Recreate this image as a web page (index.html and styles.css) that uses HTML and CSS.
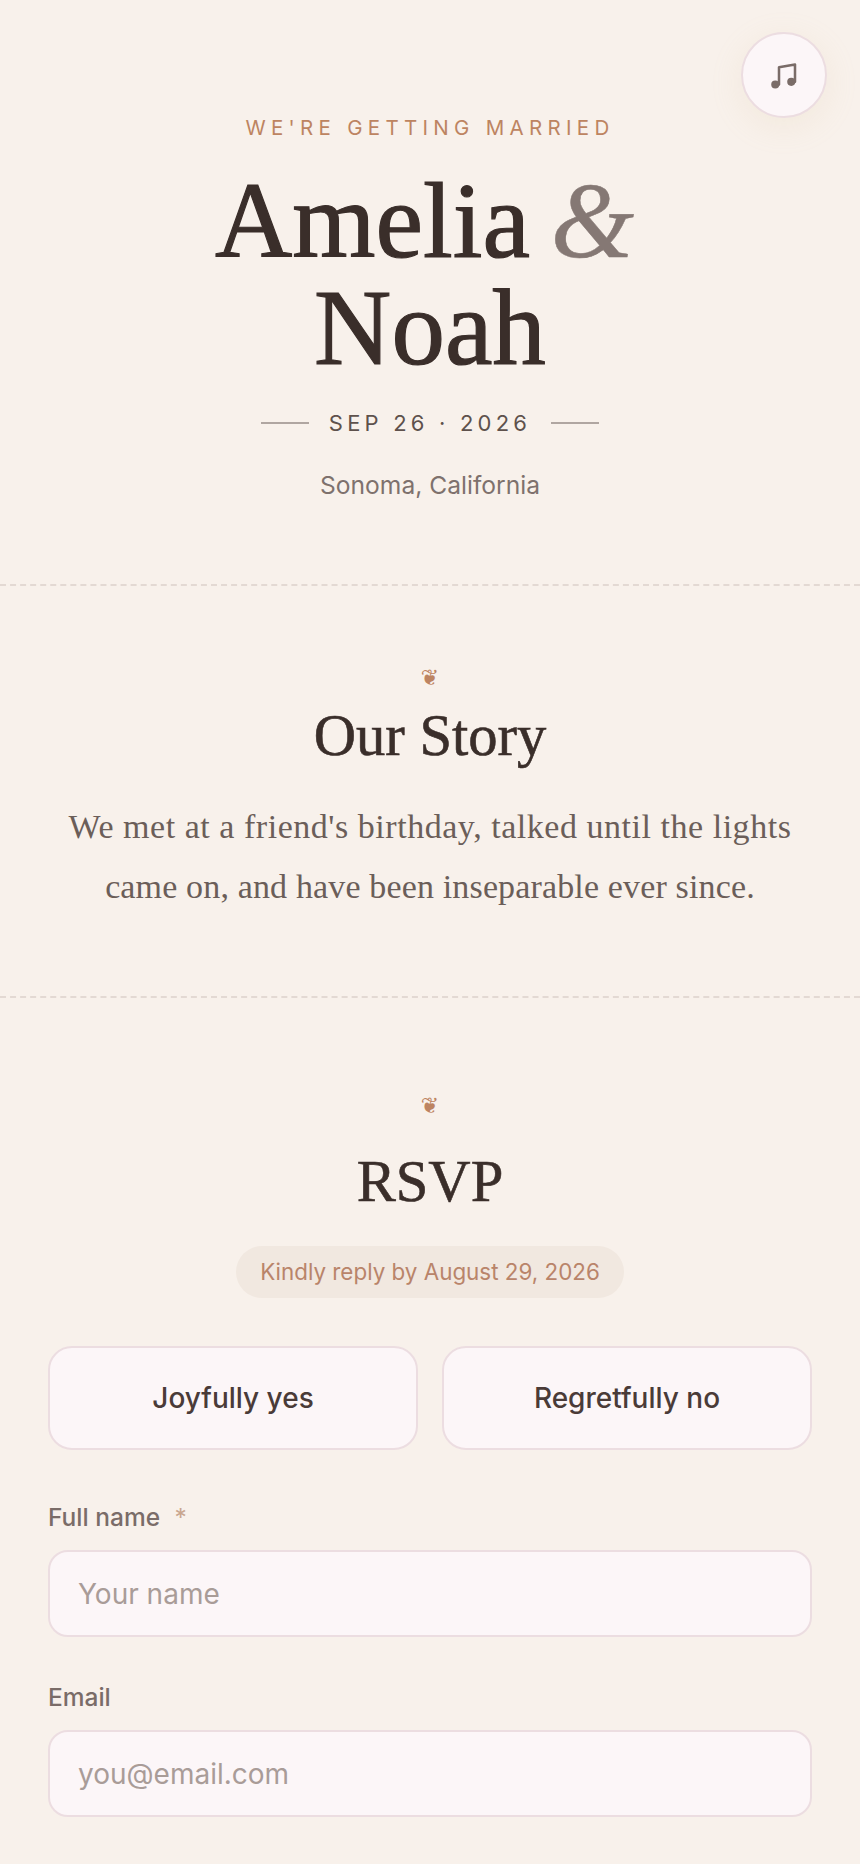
FILE: index.html
```html
<!DOCTYPE html>
<html lang="en">
<head>
    <meta charset="UTF-8">
    <meta name="viewport" content="width=device-width, initial-scale=1.0">
    <title>Amelia &amp; Noah</title>
    <link rel="stylesheet" href="styles.css">
</head>
<body>
    <button class="music-btn" type="button" aria-label="Play music">
        <svg class="music-icon" width="32" height="32" viewBox="0 0 24 24" fill="none" stroke="#7a6c68" stroke-width="1.9" stroke-linecap="round" stroke-linejoin="round">
            <path d="M9 18V5l12-2v13"/>
            <circle cx="6.2" cy="18" r="2.1" fill="#7a6c68"/>
            <circle cx="18.2" cy="16" r="2.1" fill="#7a6c68"/>
        </svg>
    </button>

    <header class="hero">
        <p class="eyebrow">WE'RE GETTING MARRIED</p>
        <h1 class="names">Amelia <span class="amp">&amp;</span><br>Noah</h1>
        <div class="date-row">
            <span class="date-line"></span>
            <span class="date">SEP 26 · 2026</span>
            <span class="date-line"></span>
        </div>
        <p class="place">Sonoma, California</p>
    </header>

    <section class="story">
        <div class="ornament">❦</div>
        <h2>Our Story</h2>
        <p class="story-text">We met at a friend's birthday, talked until the lights came on, and have been inseparable ever since.</p>
    </section>

    <section class="rsvp">
        <div class="ornament">❦</div>
        <h2>RSVP</h2>
        <div class="deadline-wrap"><span class="deadline">Kindly reply by August 29, 2026</span></div>

        <div class="choices">
            <button class="choice" type="button">Joyfully yes</button>
            <button class="choice" type="button">Regretfully no</button>
        </div>

        <form class="rsvp-form">
            <div class="field">
                <label for="name">Full name <span class="req">*</span></label>
                <input id="name" type="text" placeholder="Your name">
            </div>
            <div class="field">
                <label for="email">Email</label>
                <input id="email" type="email" placeholder="you@email.com">
            </div>
        </form>
    </section>
</body>
</html>
```

FILE: styles.css
```css
* {
    box-sizing: border-box;
}

html, body {
    margin: 0;
    padding: 0;
}

body {
    height: 1864px;
    overflow: hidden;
    position: relative;
    background-color: #f8f1eb;
    color: #3a2e2a;
    font-family: "Inter", "Liberation Sans", sans-serif;
    text-align: center;
}

h1, h2, p {
    margin: 0;
    font-weight: 400;
}

/* music toggle */
.music-btn {
    position: absolute;
    top: 32px;
    right: 33px;
    width: 86px;
    height: 86px;
    padding: 0;
    display: flex;
    align-items: center;
    justify-content: center;
    border-radius: 50%;
    border: 2px solid #ecdde1;
    background: #fcf6f8;
    box-shadow: 0 8px 32px rgba(215, 195, 150, 0.16);
}

.music-icon {
    transform: translate(-1px, 1.5px);
}

/* hero */
.hero {
    height: 586px;
    padding-top: 115px;
    border-bottom: 2px dashed #e3d9d3;
}

.eyebrow {
    font-size: 20.5px;
    line-height: 26px;
    letter-spacing: 5.3px;
    color: #bd8461;
}

.names {
    margin-top: 27px;
    font-family: "Liberation Serif", serif;
    font-size: 107px;
    line-height: 107px;
    word-spacing: -6px;
    -webkit-text-stroke: 1.2px #3a2e2a;
    color: #3a2e2a;
}

.amp {
    margin-right: 11px;
    font-style: italic;
    color: #857874;
    -webkit-text-stroke: 0.5px #857874;
}

.date-row {
    margin-top: 26px;
    display: flex;
    align-items: center;
    justify-content: center;
    gap: 20px;
}

.date-line {
    width: 48px;
    height: 2px;
    background: #b0a6a1;
}

.date {
    font-size: 22px;
    line-height: 30px;
    letter-spacing: 4.2px;
    color: #5e514c;
}

.place {
    margin-top: 31px;
    font-size: 24.6px;
    line-height: 32px;
    color: #7e716d;
}

/* story */
.story {
    height: 412px;
    padding: 79px 48px 0;
    border-bottom: 2px dashed #e3d9d3;
}

.ornament {
    font-family: "DejaVu Sans", sans-serif;
    font-size: 22px;
    line-height: 26px;
    color: #bd8461;
}

h2 {
    font-family: "Liberation Serif", serif;
    font-size: 58.6px;
    line-height: 68px;
    -webkit-text-stroke: 0.6px #3a2e2a;
    color: #3a2e2a;
}

.story h2 {
    margin-top: 11px;
}

.story-text {
    margin-top: 27px;
    font-family: "Liberation Serif", serif;
    font-size: 34px;
    line-height: 60px;
    letter-spacing: 0.15px;
    color: #6b5e59;
}

.story-text::first-line {
    letter-spacing: 0.53px;
}

/* rsvp */
.rsvp {
    padding: 95px 48px 0;
}

.rsvp h2 {
    margin-top: 29px;
}

.deadline-wrap {
    margin-top: 30px;
}

.deadline {
    display: inline-block;
    height: 52px;
    padding: 0 24px;
    border-radius: 26px;
    background: #f1e8e0;
    font-size: 22.4px;
    line-height: 52px;
    color: #b9846a;
}

.choices {
    margin-top: 48px;
    display: grid;
    grid-template-columns: 1fr 1fr;
    gap: 24px;
}

.choice {
    height: 104px;
    border: 2px solid #ecdde1;
    border-radius: 24px;
    background: #fcf6f8;
    font-family: inherit;
    font-size: 28px;
    font-weight: 500;
    color: #4a3b38;
}

.rsvp-form {
    margin-top: 51px;
    text-align: left;
}

.field {
    margin-bottom: 44px;
}

.field label {
    display: block;
    margin-bottom: 17px;
    font-size: 24.5px;
    line-height: 32px;
    font-weight: 500;
    color: #7a6c68;
}

.req {
    margin-left: 8px;
    font-weight: 400;
    color: #c9a68f;
}

.field input {
    display: block;
    width: 100%;
    height: 87px;
    padding: 0 28px;
    border: 2px solid #ecdde1;
    border-radius: 20px;
    background: #fcf6f8;
    font-family: inherit;
    font-size: 28px;
}

.field input::placeholder {
    color: #a99c98;
    opacity: 1;
}
```
